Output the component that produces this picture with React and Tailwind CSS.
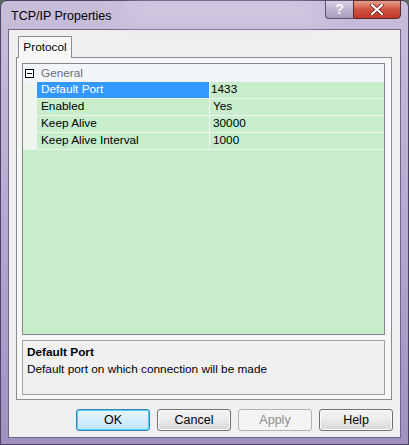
import React from "react";

const rows = [
  { name: "Default Port", value: "1433", selected: true },
  { name: "Enabled", value: "Yes" },
  { name: "Keep Alive", value: "30000" },
  { name: "Keep Alive Interval", value: "1000" },
];

const Btn = ({ children, focused, disabled }) => {
  let cls =
    "w-[74px] h-[22px] rounded-[3px] border flex items-center justify-center text-[12.5px] ";
  if (focused) {
    cls +=
      "border-[#3c7fb1] bg-gradient-to-b from-[#eaf6fd] to-[#bee6fd] text-black shadow-[inset_0_0_0_1px_#48d7fb]";
  } else if (disabled) {
    cls += "border-[#adb2b5] bg-[#f4f4f4] text-[#8d8d8d]";
  } else {
    cls +=
      "border-[#707070] bg-gradient-to-b from-[#f2f2f2] via-[#ebebeb] to-[#d6d6d6] text-black shadow-[inset_0_0_0_1px_#fcfcfc]";
  }
  return <div className={cls}>{children}</div>;
};

export default function App() {
  return (
    <div
      className="w-[409px] h-[445px] bg-[#5d6a5d]"
      style={{ fontFamily: '"Liberation Sans", Arial, sans-serif' }}
    >
      <div className="w-full h-full rounded-t-[7px] border border-[#4a4560] bg-gradient-to-b from-[#c8bedb] via-[#b6a8d0] to-[#a090c0] flex flex-col">
        {/* title bar */}
        <div className="h-[28px] flex items-start relative">
          <div className="absolute left-[120px] top-0 w-[200px] h-[24px] rounded-full bg-[#d9d2e6] opacity-60 blur-md" />
          <div className="relative pl-[10px] pt-[6px] text-[12.5px] text-black">TCP/IP Properties</div>
          <div className="relative ml-auto mr-[7px] flex -mt-px">
            <div className="w-[28px] h-[19px] rounded-bl-[4px] border border-[#5a5470] border-r-0 bg-gradient-to-b from-[#d8d2e4] via-[#bdb4cf] to-[#a89dc0] flex items-center justify-center text-[#f6f6fa] text-[14px] font-bold">
              ?
            </div>
            <div className="w-[48px] h-[19px] rounded-br-[4px] border border-[#5a2a2a] bg-gradient-to-b from-[#e4a08e] via-[#cf5240] to-[#c0392b] flex items-center justify-center">
              <svg width="14" height="11" viewBox="0 0 14 11">
                <path d="M2 1 L12 10 M12 1 L2 10" stroke="#5a1a14" strokeWidth="3.6" strokeLinecap="round" />
                <path d="M2 1 L12 10 M12 1 L2 10" stroke="#ffffff" strokeWidth="2.2" strokeLinecap="round" />
              </svg>
            </div>
          </div>
        </div>

        {/* client area */}
        <div className="mx-[7px] mb-[6px] flex-1 border border-[#6e6888] bg-[#f0f0f0] flex flex-col text-[11.8px]">
          <div className="pt-[6px] pl-[7px]">
            <div className="ml-[2px] w-[54px] h-[22px] relative z-10 -mb-px border-t border-x border-[#898c95] bg-[#f7f7f7] flex items-center justify-center text-black">
              Protocol
            </div>
            <div className="w-[376px] h-[343px] border border-[#898c95] bg-[#f7f7f7] pt-[5px] pl-[5px] flex flex-col">
              {/* property grid */}
              <div className="w-[363px] h-[272px] border border-[#828790] bg-[#c7edcc] flex flex-col">
                <div className="h-[18px] bg-[#f2f5fa] flex items-center">
                  <div className="ml-[2px] w-[9px] h-[9px] border border-black bg-white flex items-center justify-center">
                    <div className="w-[5px] h-px bg-black" />
                  </div>
                  <div className="ml-[7px] pt-[2px] text-[#6e6e6e]">General</div>
                </div>
                {rows.map((r) => (
                  <div key={r.name} className="h-[17px] flex border-b border-[#eef5ef]">
                    <div className="w-[14px] bg-[#eef5ef]" />
                    <div
                      className={
                        "w-[172px] pl-[4px] flex items-center " +
                        (r.selected ? "bg-[#3399ff] text-white" : "text-black")
                      }
                    >
                      {r.name}
                    </div>
                    <div className="w-px bg-[#eef5ef]" />
                    <div className={"flex-1 flex items-center text-black " + (r.selected ? "pl-px" : "pl-[3px]")}>
                      {r.value}
                    </div>
                  </div>
                ))}
              </div>
              {/* description */}
              <div className="mt-[5px] w-[363px] h-[55px] border border-[#a0a0a0] bg-[#f0f0f0] px-[4px] pt-[3px] text-black leading-[17px]">
                <div className="font-bold">Default Port</div>
                <div>Default port on which connection will be made</div>
              </div>
            </div>
          </div>

          {/* buttons */}
          <div className="mt-[9px] mr-[7px] flex justify-end gap-[7px]">
            <Btn focused>OK</Btn>
            <Btn>Cancel</Btn>
            <Btn disabled>Apply</Btn>
            <Btn>Help</Btn>
          </div>
        </div>
      </div>
    </div>
  );
}
